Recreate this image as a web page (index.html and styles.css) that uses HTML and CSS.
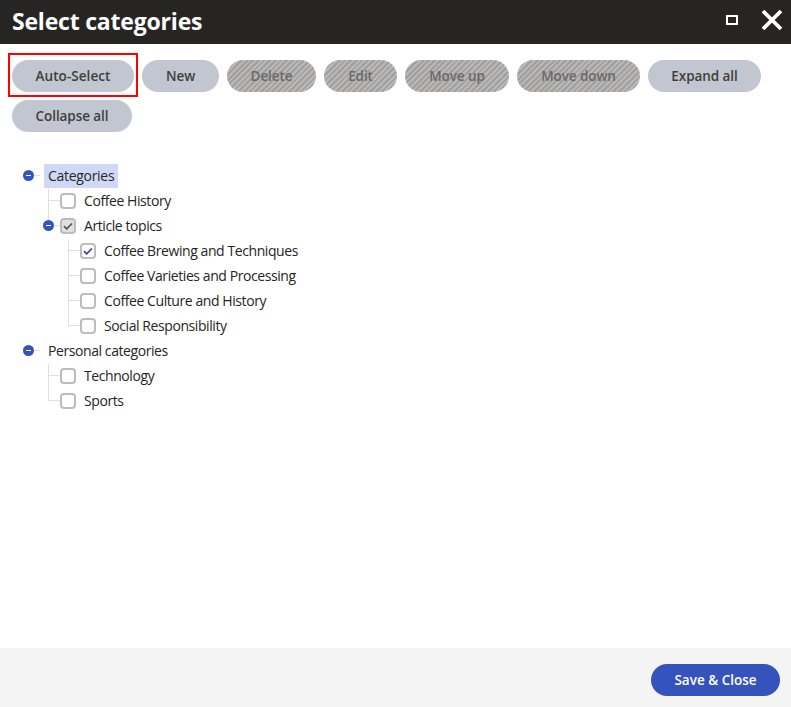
FILE: index.html
```html
<!DOCTYPE html>
<html lang="en">
<head>
<meta charset="utf-8">
<title>Select categories</title>
<link rel="stylesheet" href="styles.css">
</head>
<body>
<div class="dialog">
  <header class="header">
    <h1>Select categories</h1>
    <div class="window-actions">
      <span class="maximize"></span>
      <svg class="close" width="22" height="22" viewBox="0 0 22 22"><path d="M2 2L20 20M20 2L2 20"/></svg>
    </div>
  </header>
  <main class="content">
    <div class="toolbar">
      <button class="btn auto highlighted"><span>Auto-Select</span></button>
      <button class="btn new"><span>New</span></button>
      <button class="btn delete" disabled><span>Delete</span></button>
      <button class="btn edit" disabled><span>Edit</span></button>
      <button class="btn up" disabled><span>Move up</span></button>
      <button class="btn down" disabled><span>Move down</span></button>
      <button class="btn expand"><span>Expand all</span></button>
      <button class="btn collapse"><span>Collapse all</span></button>
    </div>
    <ul class="tree">
      <li>
        <div class="row"><span class="toggle"></span><span class="label root selected">Categories</span></div>
        <ul>
          <li><div class="row"><span class="branch"></span><span class="box"></span><span class="label">Coffee History</span></div></li>
          <li class="last">
            <div class="row"><span class="toggle"></span><span class="box partial"><svg viewBox="0 0 12 12"><path d="M2 6.2L4.7 8.8L10 3.5"/></svg></span><span class="label">Article topics</span></div>
            <ul>
              <li><div class="row"><span class="branch"></span><span class="box checked"><svg viewBox="0 0 12 12"><path d="M2 6.2L4.7 8.8L10 3.5"/></svg></span><span class="label">Coffee Brewing and Techniques</span></div></li>
              <li><div class="row"><span class="branch"></span><span class="box"></span><span class="label">Coffee Varieties and Processing</span></div></li>
              <li><div class="row"><span class="branch"></span><span class="box"></span><span class="label">Coffee Culture and History</span></div></li>
              <li class="last"><div class="row"><span class="branch"></span><span class="box"></span><span class="label">Social Responsibility</span></div></li>
            </ul>
          </li>
        </ul>
      </li>
      <li>
        <div class="row"><span class="toggle"></span><span class="label root">Personal categories</span></div>
        <ul>
          <li><div class="row"><span class="branch"></span><span class="box"></span><span class="label">Technology</span></div></li>
          <li class="last"><div class="row"><span class="branch"></span><span class="box"></span><span class="label">Sports</span></div></li>
        </ul>
      </li>
    </ul>
  </main>
  <footer class="footer"><button class="btn primary"><span>Save &amp; Close</span></button></footer>
</div>
</body>
</html>
```
FILE: styles.css
```css
* { box-sizing: border-box; }
body { margin: 0; font-family: "Segoe UI", "Open Sans", sans-serif; font-size: 14px; color: #262524; background: #fff; }
.dialog { height: 707px; display: flex; flex-direction: column; }
.header { height: 44px; flex: none; background: #262524; color: #fff; display: flex; align-items: center; justify-content: space-between; padding: 0 8px 0 12px; }
h1 { margin: 0; font-size: 23px; line-height: 42px; height: 44px; font-weight: 700; letter-spacing: -0.2px; white-space: nowrap; }
.window-actions { display: flex; align-items: center; gap: 23px; margin-top: -4px; }
.maximize { width: 12px; height: 10px; border: 2px solid #fff; }
.close { display: block; fill: none; stroke: #fff; stroke-width: 3.8; }
.content { flex: 1; padding: 16px 12px; }
.toolbar { display: flex; flex-wrap: wrap; gap: 8px; height: 72px; }
.btn { height: 32px; padding: 0; border: 0; border-radius: 16px; background: #c1c6d0; color: #3f3e3d; font: 600 13.5px/32px "Segoe UI", "Open Sans", sans-serif; letter-spacing: -0.08px; text-align: center; white-space: nowrap; }
.btn:disabled { color: #6b6967; background: repeating-linear-gradient(-45deg, #b8b8b8 0 2px, #a1a09f 2px 4px); }
.auto { width: 122px; letter-spacing: 0.05px; }
.new { width: 77px; }
.delete { width: 89px; }
.edit { width: 73px; }
.up { width: 104px; }
.down { width: 123px; }
.expand { width: 113px; }
.collapse { width: 120px; }
.highlighted { position: relative; }
.highlighted::after { content: ""; position: absolute; inset: -7px -4px -5px; border: 2px solid #f00; }
.tree, .tree ul { list-style: none; margin: 0; padding: 0; }
.tree { margin-top: 32px; padding-left: 8px; }
.tree li { position: relative; }
.tree ul { padding-left: 28px; }
.tree ul ul { padding-left: 20px; }
.row { height: 25px; display: flex; align-items: flex-start; }
.label { line-height: 24px; margin-left: 8px; letter-spacing: -0.42px; white-space: nowrap; }
.label.root { margin-left: 0; padding: 0 4px; }
.label.selected { width: 74px; letter-spacing: -0.3px; background: #cfd9f7; }
.toggle { position: relative; width: 11px; height: 11px; margin: 6px 10px 0 3px; border-radius: 50%; background: #3553bc; }
.toggle::before { content: ""; position: absolute; left: 3px; top: 5px; width: 5px; height: 1px; background: #fff; }
.toggle::after { content: ""; position: absolute; left: 11px; top: 5px; width: 6px; height: 1px; background: #dfdfdf; }
.tree ul .toggle { margin-left: -5px; margin-right: 6px; }
.branch { width: 12px; height: 1px; margin-top: 11px; background: #dfdfdf; }
.tree ul > li::before { content: ""; position: absolute; left: 0; top: 0; width: 1px; height: 25px; background: #dfdfdf; }
.tree ul > li.last::before { height: 12px; }
.box { width: 16px; height: 16px; margin-top: 4px; border: 2px solid #bdbbbb; border-radius: 4px; background: #fff; }
.box svg { display: block; width: 12px; height: 12px; fill: none; stroke: #3b3bb5; stroke-width: 1.7; }
.box.partial { background: #e0e0e3; }
.box.partial svg { stroke: #525064; }
.footer { height: 59px; flex: none; background: #f4f4f4; padding: 16px 11px; display: flex; justify-content: flex-end; }
.primary { width: 129px; background: #3553bc; color: #fff; letter-spacing: 0; }
```
